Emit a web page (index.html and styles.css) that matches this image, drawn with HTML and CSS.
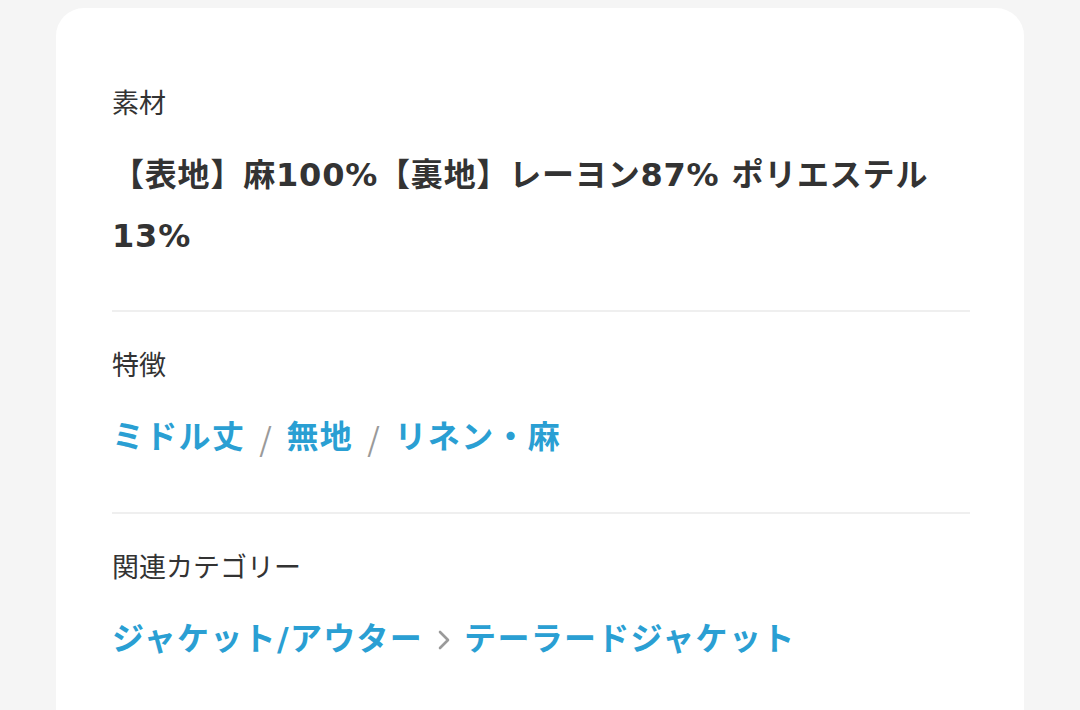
FILE: index.html
```html
<!DOCTYPE html>
<html lang="ja">
<head>
<meta charset="utf-8">
<link rel="stylesheet" href="styles.css">
</head>
<body>
<div class="page">
  <div class="card">
    <section class="sec sec-first">
      <div class="label">素材</div>
      <div class="value">【表地】麻100%【裏地】レーヨン87% ポリエステル13%</div>
    </section>
    <section class="sec">
      <div class="label">特徴</div>
      <div class="value links">
        <a class="link">ミドル丈</a><span class="sep">/</span><a class="link">無地</a><span class="sep">/</span><a class="link">リネン・麻</a>
      </div>
    </section>
    <section class="sec">
      <div class="label">関連カテゴリー</div>
      <div class="value links">
        <a class="link">ジャケット/アウター</a><span class="chev"><svg width="14" height="22" viewBox="0 0 14 22"><path d="M3 3 L11 11 L3 19" fill="none" stroke="#9a9a9a" stroke-width="2.6" stroke-linecap="round" stroke-linejoin="round"/></svg></span><a class="link">テーラードジャケット</a>
      </div>
    </section>
  </div>
</div>
</body>
</html>
```

FILE: styles.css
```css
* { box-sizing: border-box; }
html, body {
  margin: 0;
  padding: 0;
  background: #f5f5f5;
  height: 710px;
  overflow: hidden;
}
body {
  font-family: "Noto Sans CJK JP", "Noto Sans", sans-serif;
  color: #333333;
}
.page {
  padding: 8px 56px 0 56px;
}
.card {
  background: #ffffff;
  border-radius: 28px;
  padding: 42px 54px 40px 56px;
  height: 760px;
}
.sec {
  padding: 32px 0 44px;
  border-top: 2px solid #efefef;
}
.sec-first {
  border-top: none;
  padding-bottom: 43px;
}
.label {
  font-size: 27px;
  line-height: 40px;
  color: #333333;
  margin-bottom: 23px;
}
.value {
  font-family: "DejaVu Sans", "Noto Sans CJK JP", sans-serif;
  font-size: 32px;
  line-height: 61px;
  font-weight: 700;
  letter-spacing: 0.8px;
  color: #333333;
}
.links {
  display: flex;
  align-items: center;
}
.link {
  color: #2a9fd3;
  text-decoration: none;
  letter-spacing: 1.3px;
}
.sep {
  font-family: "Noto Sans CJK JP", sans-serif;
  font-weight: 400;
  color: #9a9a9a;
  padding: 0 14px;
}
.chev {
  display: flex;
  align-items: center;
  padding: 0 13px 0 14px;
}
```
